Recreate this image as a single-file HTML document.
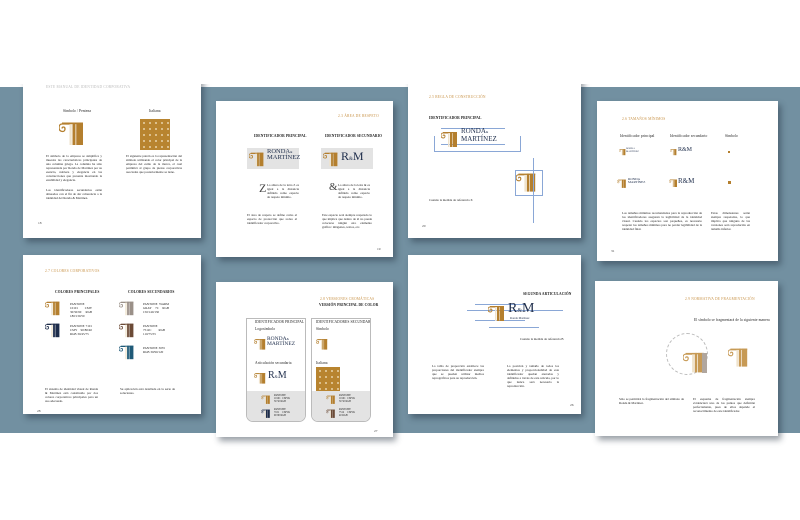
<!DOCTYPE html>
<html><head><meta charset="utf-8">
<style>
*{margin:0;padding:0;box-sizing:border-box}
body{width:800px;height:520px;background:#fff;position:relative;overflow:hidden;font-family:"Liberation Serif",serif;color:#333}
.band{position:absolute;left:0;top:87px;width:800px;height:346px;background:#7290a1}
.cover{position:absolute;left:0;top:0;width:800px;height:84px;background:#fff;z-index:5}
.pg{position:absolute;background:#fff;box-shadow:3px 4px 6px rgba(30,45,60,.45);overflow:hidden}
.a{position:absolute}
.t{position:absolute;font-size:3.2px;line-height:4px;color:#222;text-align:justify}
.h{position:absolute;font-size:3.6px;font-weight:bold;color:#222;letter-spacing:.1px;white-space:nowrap}
.o{position:absolute;font-size:3.6px;color:#c9944a;letter-spacing:.2px;white-space:nowrap}
.n{position:absolute;font-size:3.5px;color:#444}
.pat{background:#b8842f;background-image:radial-gradient(circle,#f3e6c8 0.7px,transparent 1px);background-size:6px 6px;background-position:1px 1px}
.gray{background:#e3e3e3}
.dash{border:0.6px solid #8aa7d6}
</style></head><body>
<svg width="0" height="0" style="position:absolute">
<defs>
<symbol id="col" viewBox="0 0 40 40">
<path d="M14 8 H4 C1 8 0 11 0 13 C0 16 2 18 5 18 C7 18 8 16 8 14.5 C8 13 7 12 5.5 12 C4.5 12 4 13 4.5 14" fill="none" stroke="currentColor" stroke-width="1.8"/>
<rect x="14" y="6" width="3" height="30" fill="#efe3cc"/>
<rect x="18" y="6" width="4" height="30" fill="currentColor"/>
<rect x="23" y="6" width="9" height="30" fill="currentColor"/>
<rect x="4" y="6" width="28" height="2.2" fill="currentColor"/>
</symbol>
</defs>
</svg>
<div class="band"></div>
<div class="cover"></div>

<!-- P1 -->
<div class="pg" style="left:23px;top:72px;width:178px;height:166px">
<div class="o" style="left:23px;top:13px;color:#bbb">ESTE MANUAL DE IDENTIDAD CORPORATIVA</div>
<div class="h" style="left:40px;top:37px;font-weight:normal">Símbolo / Pentena</div>
<div class="h" style="left:126px;top:37px;font-weight:normal">Italiana</div>
<svg class="a" style="left:36px;top:46px;color:#b47f2e" width="30" height="30"><use href="#col"/></svg>
<div class="a pat" style="left:117px;top:47px;width:30px;height:31px"></div>
<div class="t" style="left:23px;top:82px;width:56px">El símbolo de la empresa se simplifica y muestra las características principales de una columna griega. La columna ha sido representada por Ronda de Martínez por su esencia, nobleza y elegancia en las construcciones que presenta mostrando la estabilidad y elegancia.</div>
<div class="t" style="left:23px;top:116px;width:56px">Los identificadores secundarios están alineados con el fin de dar coherencia a la identidad del Ronda & Martínez.</div>
<div class="t" style="left:103px;top:82px;width:56px">El siguiente patrón es la representación del símbolo utilizando el color principal de la empresa del estilo de la marca, el cual permitirá al grupo de piezas corporativas asociadas que posteriormente se tiene.</div>
<div class="n" style="left:15px;top:149px">18</div>
</div>

<!-- P2 -->
<div class="pg" style="left:216px;top:101px;width:177px;height:156px">
<div class="o" style="left:122px;top:13px">2.3 ÁREA DE RESPETO</div>
<div class="h" style="left:38px;top:33px">IDENTIFICADOR PRINCIPAL</div>
<div class="h" style="left:109px;top:33px">IDENTIFICADOR SECUNDARIO</div>
<div class="a gray" style="left:31px;top:47px;width:52px;height:21px"></div>
<svg class="a" style="left:33px;top:49px;color:#b47f2e" width="18" height="18"><use href="#col"/></svg>
<div class="a" style="left:51px;top:48px;font-size:6.5px;line-height:6px;color:#1d2c4a;font-family:'Liberation Serif'">RONDA<span style="font-size:3px">&amp;</span><br>MARTÍNEZ</div>
<div class="a gray" style="left:105px;top:47px;width:52px;height:21px"></div>
<svg class="a" style="left:107px;top:49px;color:#b47f2e" width="18" height="18"><use href="#col"/></svg>
<div class="a" style="left:125px;top:48px;font-size:12px;color:#1d2c4a">R<span style="font-size:5px">&amp;</span>M</div>
<div class="a" style="left:43px;top:80px;font-size:12px;color:#444">Z</div>
<div class="t" style="left:51px;top:82px;width:32px">La altura de la letra Z es igual a la distancia definida como espacio de respeto mínimo.</div>
<div class="a" style="left:113px;top:80px;font-size:11px;color:#444">&amp;</div>
<div class="t" style="left:122px;top:82px;width:32px">La altura de la letra & es igual a la distancia definida como espacio de respeto mínimo.</div>
<div class="t" style="left:31px;top:112px;width:50px">El área de respeto se define como el espacio de protección que rodea al identificador corporativo.</div>
<div class="t" style="left:106px;top:112px;width:50px">Este espacio será siempre respetado lo que implica que dentro de él no puede colocarse ningún otro elemento gráfico: imágenes, textos, etc.</div>
<div class="n" style="left:161px;top:146px">19</div>
</div>

<!-- P3 -->
<div class="pg" style="left:408px;top:72px;width:173px;height:166px">
<div class="o" style="left:21px;top:23px">2.5 REGLA DE CONSTRUCCIÓN</div>
<div class="h" style="left:21px;top:44px">IDENTIFICADOR PRINCIPAL</div>
<div class="a dash" style="left:33px;top:56px;width:64px;height:17px;border-left:none;border-right:none"></div>
<div class="a dash" style="left:26px;top:64px;width:87px;height:16px;border-top:none"></div>
<svg class="a" style="left:33px;top:57px;color:#b47f2e" width="20" height="20"><use href="#col"/></svg>
<div class="a" style="left:53px;top:56px;font-size:7px;line-height:6.5px;color:#1d2c4a">RONDA<span style="font-size:3px">&amp;</span><br>MARTÍNEZ</div>
<div class="a dash" style="left:107px;top:98px;width:28px;height:26px"></div>
<svg class="a" style="left:108px;top:97px;color:#b47f2e" width="24" height="26"><use href="#col"/></svg>
<div class="a dash" style="left:125px;top:86px;width:0;height:65px;border-width:0 0 0 .6px"></div>
<div class="t" style="left:21px;top:126px;width:60px">Cuando la medida de referencia X</div>
<div class="n" style="left:14px;top:152px">20</div>
</div>

<!-- P4 -->
<div class="pg" style="left:597px;top:101px;width:181px;height:160px">
<div class="o" style="left:25px;top:16px">2.6 TAMAÑOS MÍNIMOS</div>
<div class="h" style="left:23px;top:33px;font-weight:normal">Identificador principal</div>
<div class="h" style="left:73px;top:33px;font-weight:normal">Identificador secundario</div>
<div class="h" style="left:128px;top:33px;font-weight:normal">Símbolo</div>
<svg class="a" style="left:22px;top:47px;color:#b47f2e" width="8" height="8"><use href="#col"/></svg>
<div class="a" style="left:29px;top:47px;font-size:2.5px;line-height:2.5px;color:#1d2c4a">RONDA<br>MARTÍNEZ</div>
<svg class="a" style="left:73px;top:47px;color:#b47f2e" width="8" height="8"><use href="#col"/></svg>
<div class="a" style="left:81px;top:46px;font-size:6px;color:#1d2c4a">R&amp;M</div>
<div class="a" style="left:131px;top:50px;width:2px;height:2px;background:#b47f2e"></div>
<svg class="a" style="left:20px;top:77px;color:#b47f2e" width="11" height="11"><use href="#col"/></svg>
<div class="a" style="left:31px;top:77px;font-size:3.4px;line-height:3.4px;color:#1d2c4a">RONDA<br>MARTÍNEZ</div>
<svg class="a" style="left:72px;top:77px;color:#b47f2e" width="10" height="10"><use href="#col"/></svg>
<div class="a" style="left:81px;top:76px;font-size:7px;color:#1d2c4a">R&amp;M</div>
<div class="a" style="left:131px;top:80px;width:2.5px;height:3px;background:#b47f2e"></div>
<div class="t" style="left:25px;top:110px;width:80px">Los tamaños mínimos recomendados para la reproducción de los identificadores aseguran la legibilidad de la identidad visual. Cuando los espacios son pequeños, es necesario respetar los tamaños mínimos para no perder legibilidad de la identidad final.</div>
<div class="t" style="left:114px;top:110px;width:39px">Estas dimensiones serán siempre respetadas, lo que implica que ninguna de las versiones será reproducida en tamaño inferior.</div>
<div class="n" style="left:14px;top:148px">31</div>
</div>

<!-- P5 -->
<div class="pg" style="left:23px;top:255px;width:178px;height:159px">
<div class="o" style="left:22px;top:14px">2.7 COLORES CORPORATIVOS</div>
<div class="h" style="left:32px;top:35px">COLORES PRINCIPALES</div>
<div class="h" style="left:105px;top:35px">COLORES SECUNDARIOS</div>
<svg class="a" style="left:22px;top:44px;color:#b47f2e" width="18" height="18"><use href="#col"/></svg>
<div class="t" style="left:47px;top:47px;width:22px">PANTONE 10101 CMY 30/50/90 RGB 180/130/50</div>
<svg class="a" style="left:22px;top:66px;color:#1d2c4a" width="18" height="18"><use href="#col"/></svg>
<div class="t" style="left:47px;top:69px;width:22px">PANTONE 7101 CMY 90/80/40 RGB 30/45/75</div>
<svg class="a" style="left:96px;top:44px;color:#9a9088" width="18" height="18"><use href="#col"/></svg>
<div class="t" style="left:120px;top:47px;width:26px">PANTONE WARM GRAY 7C RGB 150/140/130</div>
<svg class="a" style="left:96px;top:66px;color:#6b4a36" width="18" height="18"><use href="#col"/></svg>
<div class="t" style="left:120px;top:69px;width:22px">PANTONE 7512C RGB 110/75/55</div>
<svg class="a" style="left:96px;top:88px;color:#1f5a78" width="18" height="18"><use href="#col"/></svg>
<div class="t" style="left:120px;top:91px;width:22px">PANTONE 3035 RGB 30/90/120</div>
<div class="t" style="left:22px;top:132px;width:53px">El sistema de identidad visual de Ronda & Martínez está constituido por dos colores corporativos principales para un uso adecuado.</div>
<div class="t" style="left:97px;top:132px;width:55px">Su aplicación está detallada en la serie de soluciones.</div>
<div class="n" style="left:14px;top:154px">28</div>
</div>

<!-- P6 -->
<div class="pg" style="left:216px;top:282px;width:177px;height:155px">
<div class="o" style="left:104px;top:15px">2.8 VERSIONES CROMÁTICAS</div>
<div class="h" style="left:103px;top:21px">VERSIÓN PRINCIPAL DE COLOR</div>
<div class="a" style="left:30px;top:36px;width:60px;height:104px;border:0.8px solid #bbb;border-radius:0 0 7px 7px;overflow:hidden">
 <div class="h" style="left:8px;top:1px;font-weight:normal">IDENTIFICADOR PRINCIPAL</div>
 <div class="h" style="left:8px;top:8px;font-weight:normal">Logosímbolo</div>
 <svg class="a" style="left:7px;top:18px;color:#b47f2e" width="14" height="14"><use href="#col"/></svg>
 <div class="a" style="left:20px;top:18px;font-size:5.5px;line-height:5px;color:#1d2c4a">RONDA<span style="font-size:3px">&amp;</span><br>MARTÍNEZ</div>
 <div class="h" style="left:8px;top:42px;font-weight:normal">Articulación secundaria</div>
 <svg class="a" style="left:7px;top:52px;color:#b47f2e" width="14" height="14"><use href="#col"/></svg>
 <div class="a" style="left:21px;top:51px;font-size:10px;color:#1d2c4a">R<span style="font-size:4px">&amp;</span>M</div>
 <div class="a gray" style="left:0;top:72px;width:60px;height:32px"></div>
 <svg class="a" style="left:14px;top:75px;color:#b47f2e" width="11" height="11"><use href="#col"/></svg>
 <svg class="a" style="left:14px;top:89px;color:#1d2c4a" width="11" height="11"><use href="#col"/></svg>
 <div class="t" style="left:27px;top:76px;width:16px;font-size:2.6px;line-height:2.8px">PANTONE 10101 CMYK 30 50 RGB</div>
 <div class="t" style="left:27px;top:90px;width:16px;font-size:2.6px;line-height:2.8px">PANTONE 7101 CMYK 90 80 RGB</div>
</div>
<div class="a" style="left:95px;top:36px;width:60px;height:104px;border:0.8px solid #bbb;border-radius:0 0 7px 7px;overflow:hidden">
 <div class="h" style="left:4px;top:1px;font-weight:normal">IDENTIFICADORES SECUNDARIOS</div>
 <div class="h" style="left:4px;top:8px;font-weight:normal">Símbolo</div>
 <svg class="a" style="left:4px;top:18px;color:#b47f2e" width="14" height="14"><use href="#col"/></svg>
 <div class="h" style="left:4px;top:42px;font-weight:normal">Italiana</div>
 <div class="a pat" style="left:4px;top:48px;width:24px;height:24px"></div>
 <div class="a gray" style="left:0;top:72px;width:60px;height:32px"></div>
 <svg class="a" style="left:14px;top:75px;color:#b47f2e" width="11" height="11"><use href="#col"/></svg>
 <svg class="a" style="left:14px;top:89px;color:#6b4a36" width="11" height="11"><use href="#col"/></svg>
 <div class="t" style="left:27px;top:76px;width:16px;font-size:2.6px;line-height:2.8px">PANTONE 10101 CMYK 30 50 RGB</div>
 <div class="t" style="left:27px;top:90px;width:16px;font-size:2.6px;line-height:2.8px">PANTONE 7512 CMYK 40 RGB</div>
</div>
<div class="n" style="left:158px;top:147px">27</div>
</div>

<!-- P7 -->
<div class="pg" style="left:408px;top:255px;width:173px;height:159px">
<div class="h" style="left:115px;top:37px">SEGUNDA ARTICULACIÓN</div>
<div class="a dash" style="left:67px;top:49px;width:50px;height:17px;border-left:none;border-right:none"></div>
<div class="a dash" style="left:59px;top:55px;width:96px;height:0;border-width:.6px 0 0 0"></div>
<div class="a dash" style="left:81px;top:72px;width:50px;height:0;border-width:.6px 0 0 0"></div>
<svg class="a" style="left:80px;top:48px;color:#b47f2e" width="20" height="20"><use href="#col"/></svg>
<div class="a" style="left:100px;top:47px;font-size:14px;line-height:14px;color:#1d2c4a">R<span style="font-size:6px">&amp;</span>M</div>
<div class="a" style="left:102px;top:61px;font-size:3px;color:#1d2c4a">Ronda Martínez</div>
<div class="t" style="left:112px;top:82px;width:50px">Cuando la medida de referencia B</div>
<div class="t" style="left:24px;top:109px;width:52px">La tabla de proporción establece las proporciones del identificador siempre que se pueden utilizar medios reprográficos para su reproducción.</div>
<div class="t" style="left:99px;top:109px;width:52px">La posición y tamaño de todos los elementos y proporcionalidad de este identificador quedan anotadas y definidas a través de esta reticula, por lo que nunca será necesaria la reproducción.</div>
<div class="n" style="left:162px;top:148px">26</div>
</div>

<!-- P8 -->
<div class="pg" style="left:595px;top:281px;width:183px;height:155px">
<div class="o" style="left:90px;top:16px">2.9 NORMATIVA DE FRAGMENTACIÓN</div>
<div class="h" style="left:99px;top:37px;font-weight:normal">El símbolo se fragmentará de la siguiente manera</div>
<div class="a" style="left:71px;top:52px;width:42px;height:42px;border:0.8px dashed #bbb;border-radius:50%"></div>
<svg class="a" style="left:88px;top:68px;color:#c79a55" width="26" height="26"><use href="#col"/></svg>
<div class="a" style="left:107px;top:72px;width:5px;height:20px;background:#b0a69e"></div>
<svg class="a" style="left:133px;top:64px;color:#c79a55" width="24" height="24"><use href="#col"/></svg>
<div class="t" style="left:24px;top:116px;width:65px">Sólo se permitirá la fragmentación del símbolo de Ronda & Martínez.</div>
<div class="t" style="left:98px;top:116px;width:62px">El esquema de fragmentación siempre evidenciará uno de los puntos que definirán perfectamente, pues de ellos depende el reconocimiento de este identificador.</div>
</div>

</body></html>
